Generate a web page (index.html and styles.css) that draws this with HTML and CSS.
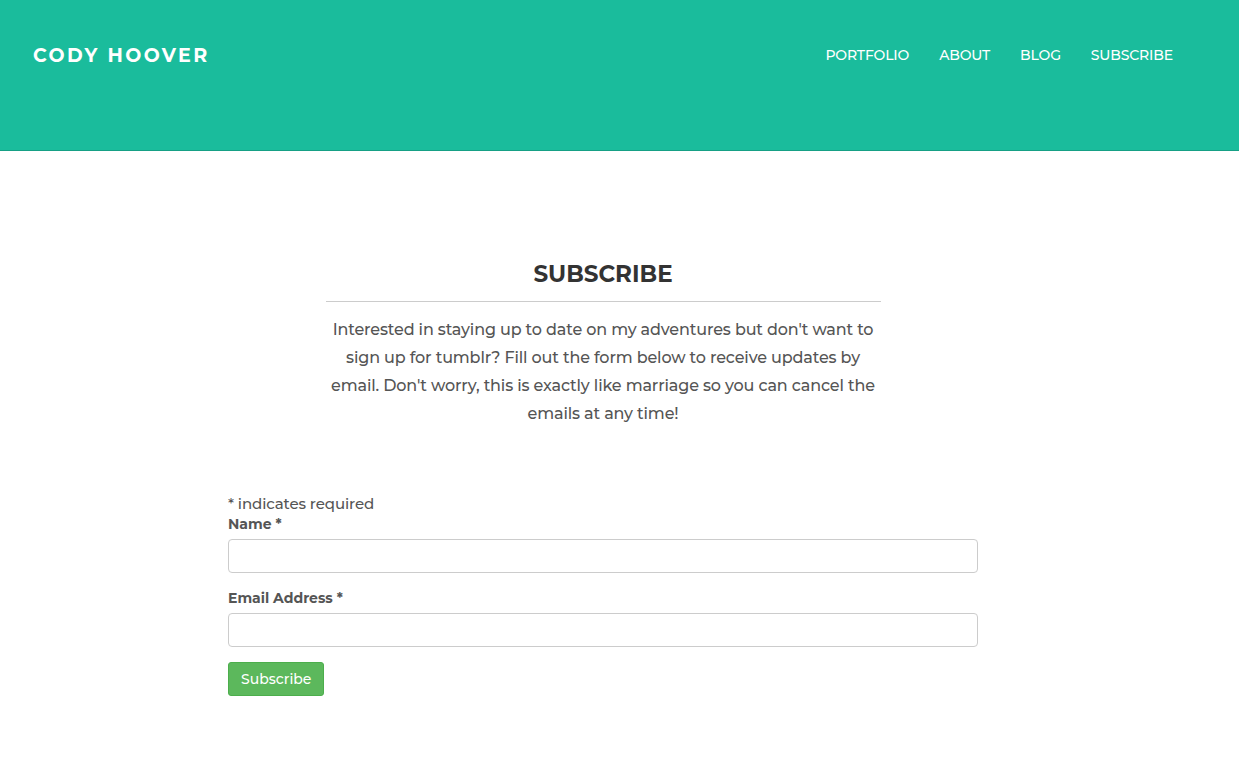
FILE: index.html
```html
<!DOCTYPE html>
<html>
<head>
<meta charset="utf-8">
<link rel="stylesheet" href="styles.css">
</head>
<body>
<header class="site-header">
  <div class="brand">CODY HOOVER</div>
  <nav class="nav">
    <a href="#">PORTFOLIO</a>
    <a href="#">ABOUT</a>
    <a href="#">BLOG</a>
    <a href="#">SUBSCRIBE</a>
  </nav>
</header>
<main class="page">
  <section class="intro">
    <h1 class="title">SUBSCRIBE</h1>
    <hr class="rule">
    <p class="lead">Interested in staying up to date on my adventures but don't want to sign up for tumblr? Fill out the form below to receive updates by email. Don't worry, this is exactly like marriage so you can cancel the emails at any time!</p>
  </section>
  <form class="form">
    <div class="req">* indicates required</div>
    <label class="label">Name *</label>
    <input class="field" type="text">
    <label class="label">Email Address *</label>
    <input class="field" type="email">
    <button class="btn" type="button">Subscribe</button>
  </form>
</main>
</body>
</html>
```
FILE: styles.css
```css
* { box-sizing: border-box; }
body {
  margin: 0;
  font-family: "Montserrat", "Lato", "Open Sans", sans-serif;
  background: #fff;
  color: #555;
}
.site-header {
  height: 151px;
  background: #1abc9c;
  border-bottom: 1px solid #16a085;
  display: flex;
  align-items: flex-start;
  justify-content: space-between;
  padding: 43px 66px 0 33px;
}
.brand {
  color: #fff;
  font-weight: 700;
  font-size: 19px;
  letter-spacing: 2.4px;
  line-height: 24px;
  padding-top: 1px;
}
.nav {
  display: flex;
  gap: 30px;
  padding-top: 3px;
}
.nav a {
  color: #fff;
  text-decoration: none;
  font-size: 14px;
  font-weight: 500;
  line-height: 18px;
  letter-spacing: -0.15px;
}
.page {
  width: 1206px;
  padding-top: 107px;
  padding-bottom: 60px;
}
.intro {
  width: 555px;
  margin: 0 auto;
  text-align: center;
}
.title {
  margin: 0;
  font-size: 23px;
  line-height: 32px;
  color: #333;
  font-weight: 700;
}
.rule {
  margin: 11px 0 14px;
  border: 0;
  border-top: 1px solid #ccc;
}
.lead {
  margin: 0;
  font-size: 16px;
  font-weight: 500;
  line-height: 28px;
  letter-spacing: -0.14px;
  color: #555;
}
.form {
  width: 750px;
  margin: 66px auto 0;
  display: flex;
  flex-direction: column;
  align-items: flex-start;
}
.req {
  font-size: 15px;
  font-weight: 500;
  line-height: 20px;
  letter-spacing: -0.1px;
}
.label {
  font-size: 14px;
  font-weight: 700;
  line-height: 20px;
  margin-bottom: 5px;
}
.field {
  width: 100%;
  height: 34px;
  border: 1px solid #ccc;
  border-radius: 4px;
  margin: 0 0 15px;
  padding: 6px 12px;
  font: inherit;
}
.btn {
  margin-top: 0;
  height: 34px;
  padding: 0 12px;
  background: #5cb85c;
  border: 1px solid #4cae4c;
  border-radius: 3px;
  color: #fff;
  font-family: inherit;
  font-weight: 500;
  font-size: 14px;
}
```
